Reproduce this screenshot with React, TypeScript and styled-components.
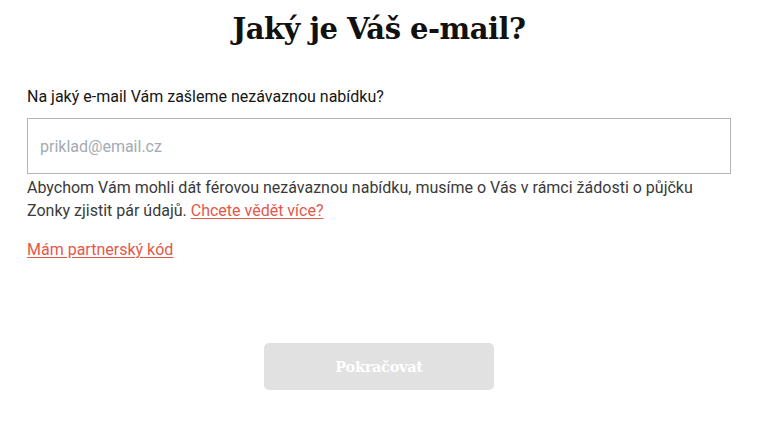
import React, { useState } from 'react'
import styled, { createGlobalStyle } from 'styled-components'

const GlobalStyle = createGlobalStyle`
  body {
    margin: 0;
    background: #ffffff;
    font-family: Roboto, "Noto Sans", Arial, sans-serif;
  }
`

const Page = styled.div`
  width: 704px;
  margin-left: 27px;
  display: flex;
  flex-direction: column;
`

const Title = styled.h1`
  margin: 0;
  padding-top: 11px;
  font-family: "DejaVu Serif", "Liberation Serif", serif;
  font-weight: bold;
  font-size: 29px;
  line-height: 36px;
  letter-spacing: -0.5px;
  color: #111111;
  text-align: center;
`

const Label = styled.label`
  margin-top: 39px;
  font-size: 16px;
  line-height: 22px;
  color: #151515;
`

const Input = styled.input`
  box-sizing: border-box;
  margin-top: 10px;
  width: 100%;
  height: 56px;
  padding: 0 12px;
  border: 1px solid #b5b5b5;
  border-radius: 0;
  font-family: Roboto, sans-serif;
  font-size: 16px;
  color: #222;
  outline: none;

  &::placeholder {
    color: #a3abb3;
  }
`

const Help = styled.p`
  margin: 2px 0 0;
  font-size: 16px;
  line-height: 23px;
  color: #3a3a3a;
`

const Link = styled.a<{ $block?: boolean }>`
  color: #e5574a;
  text-decoration: underline;
  text-underline-offset: 2px;
  cursor: pointer;
  ${({ $block }) => ($block ? 'display: block; margin-top: 17px; font-size: 16px; line-height: 22px; align-self: flex-start;' : '')}
`

const Actions = styled.div`
  margin-top: 82px;
  display: flex;
  justify-content: center;
`

const SubmitButton = styled.button`
  width: 230px;
  height: 47px;
  border: none;
  border-radius: 5px;
  background: #e1e1e1;
  color: #ffffff;
  font-family: "DejaVu Serif", "Liberation Serif", serif;
  font-weight: bold;
  font-size: 14.5px;
  letter-spacing: -0.3px;
  cursor: not-allowed;
`

export default function App() {
  const [email, setEmail] = useState('')

  return (
    <>
      <GlobalStyle />
      <Page>
        <Title>Jaký je Váš e-mail?</Title>
        <Label htmlFor="email">Na jaký e-mail Vám zašleme nezávaznou nabídku?</Label>
        <Input
          id="email"
          type="email"
          placeholder="priklad@email.cz"
          value={email}
          onChange={(e) => setEmail(e.target.value)}
        />
        <Help>
          Abychom Vám mohli dát férovou nezávaznou nabídku, musíme o Vás v rámci žádosti o půjčku
          Zonky zjistit pár údajů. <Link>Chcete vědět více?</Link>
        </Help>
        <Link $block>Mám partnerský kód</Link>
        <Actions>
          <SubmitButton disabled={!email}>Pokračovat</SubmitButton>
        </Actions>
      </Page>
    </>
  )
}
